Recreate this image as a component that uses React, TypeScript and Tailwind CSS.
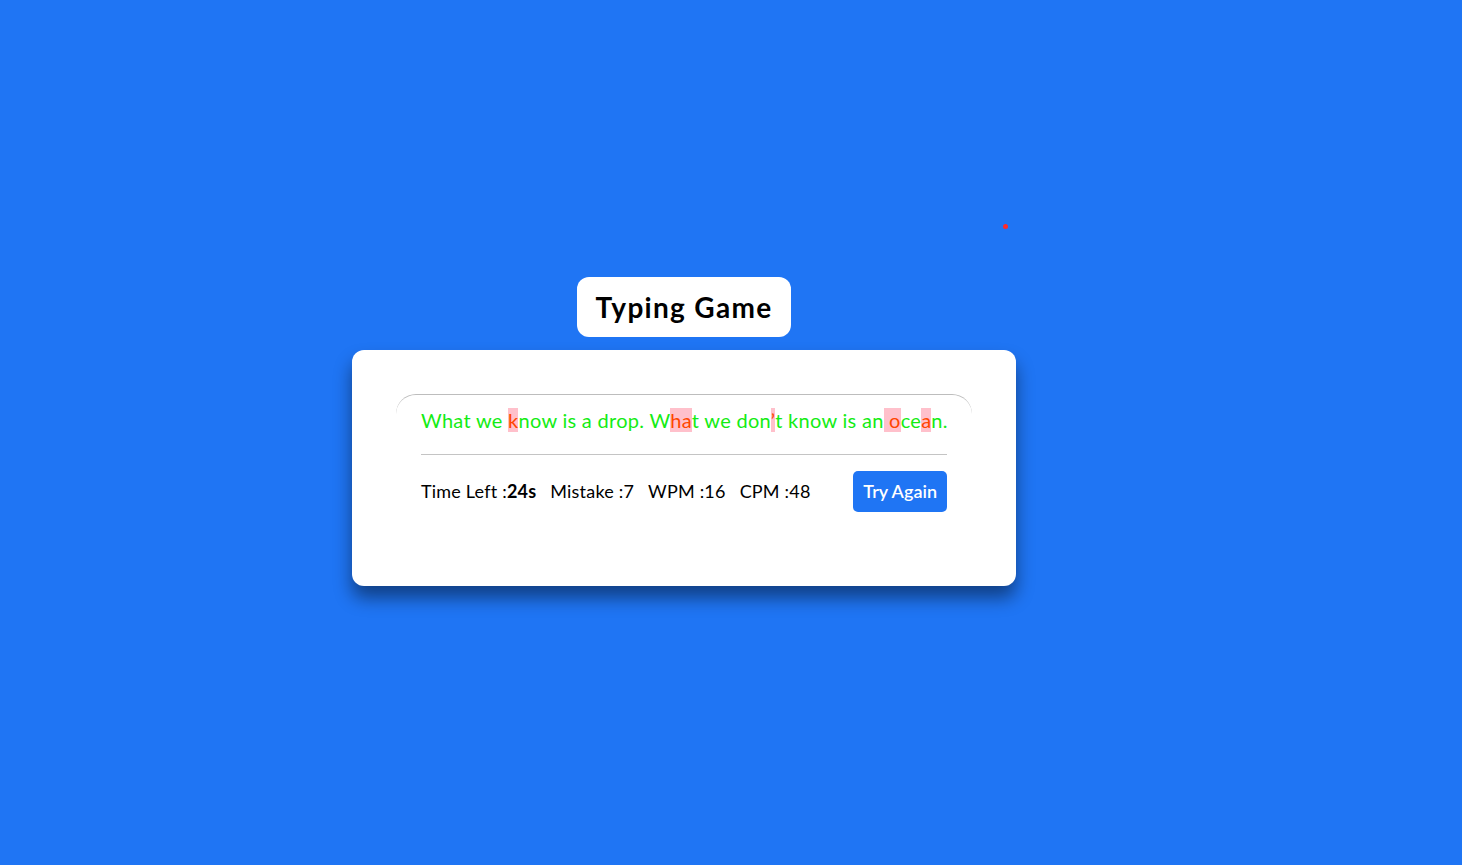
import React from "react";

const font = { fontFamily: "Lato, 'Open Sans', sans-serif" };

type Ch = { c: string; bad?: boolean };

const sentence = "What we know is a drop. What we don\u2019t know is an ocean.";
const badIdx = new Set([8, 25, 26, 35, 48, 49, 52]);

function Letters() {
  const chars: Ch[] = sentence.split("").map((c, i) => ({ c, bad: badIdx.has(i) }));
  return (
    <p className="text-[20px] leading-[30px] tracking-[0.28px] text-[#14ec14] whitespace-pre">
      {chars.map((ch, i) =>
        ch.bad ? (
          <span key={i} className="bg-[#ffc0cb] text-[#ff4500]">
            {ch.c}
          </span>
        ) : (
          <span key={i}>{ch.c}</span>
        )
      )}
    </p>
  );
}

export default function App() {
  return (
    <div className="relative min-h-[865px] w-full bg-[#1f75f4] flex items-center justify-center pr-[94px] pb-[2px]" style={font}>
      <div className="absolute left-[1003px] top-[224px] h-[5px] w-[5px] rounded-full bg-[#ff2a2a]" />
      <div className="flex flex-col items-center gap-[13px]">
        <div className="rounded-xl bg-white px-[19px] py-[10px]">
          <h1 className="text-[28px] leading-[40px] font-bold tracking-[1.3px] text-black">Typing Game</h1>
        </div>
        <div className="w-[664px] rounded-xl bg-white p-11 shadow-[0_12px_18px_rgba(0,0,0,0.45)]">
          <div className="rounded-[20px] border-t border-[#bdbdbd] px-[25px] pt-[10px] pb-[30px]">
            <Letters />
            <div className="mt-[19px] border-t border-[#c4c4c4]" />
            <div className="mt-[16px] flex items-center justify-between">
              <div className="flex items-center gap-[14px] text-[18px] tracking-[0.2px] text-black">
                <span>
                  Time Left :<b className="font-bold">24s</b>
                </span>
                <span>Mistake :7</span>
                <span>WPM :16</span>
                <span>CPM :48</span>
              </div>
              <button className="h-[41px] rounded-[5px] bg-[#1f75f4] px-[10px] text-[18px] font-semibold text-white">
                Try Again
              </button>
            </div>
          </div>
        </div>
      </div>
    </div>
  );
}
